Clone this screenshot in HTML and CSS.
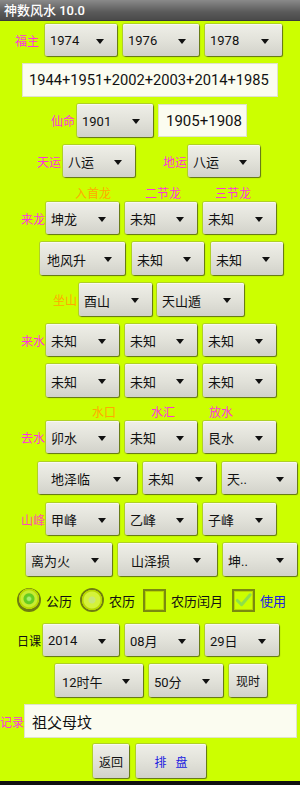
FILE: index.html
```html
<!DOCTYPE html>
<html lang="zh">
<head>
<meta charset="utf-8">
<title>神数风水 10.0</title>
<link rel="stylesheet" href="styles.css">
</head>
<body>
<div class="page">
  <div class="titlebar">神数风水 10.0</div>

  <div class="row r1">
    <span class="lbl mag w30">福主</span>
    <div class="spin w72"><span>1974</span><i></i></div>
    <div class="spin w76"><span>1976</span><i></i></div>
    <div class="spin w77"><span>1978</span><i></i></div>
  </div>

  <div class="row tf1">
    <div class="field w256 f-big">1944+1951+2002+2003+2014+1985</div>
  </div>

  <div class="row r3">
    <span class="lbl mag w26">仙命</span>
    <div class="spin w76"><span>1901</span><i></i></div>
    <div class="field w89 f-mid">1905+1908</div>
  </div>

  <div class="row r4">
    <span class="lbl mag w26">天运</span>
    <div class="spin w72"><span>八运</span><i></i></div>
    <span class="lbl mag w25 ml28">地运</span>
    <div class="spin w72"><span>八运</span><i></i></div>
  </div>

  <div class="row sub sub1">
    <span class="lbl org w70">入首龙</span>
    <span class="lbl mag w70">二节龙</span>
    <span class="lbl mag w70">三节龙</span>
  </div>

  <div class="row r5 g6">
    <span class="lbl mag w25">来龙</span>
    <div class="spin w73"><span>坤龙</span><i></i></div>
    <div class="spin w72"><span>未知</span><i></i></div>
    <div class="spin w73"><span>未知</span><i></i></div>
  </div>

  <div class="row r6 g7">
    <div class="spin w85 pl"><span>地风升</span><i></i></div>
    <div class="spin w72"><span>未知</span><i></i></div>
    <div class="spin w72"><span>未知</span><i></i></div>
  </div>

  <div class="row r7 g5">
    <span class="lbl org w26">坐山</span>
    <div class="spin w73"><span>酉山</span><i></i></div>
    <div class="spin w87"><span>天山遁</span><i></i></div>
  </div>

  <div class="row r8 g6">
    <span class="lbl mag w25">来水</span>
    <div class="spin w73"><span>未知</span><i></i></div>
    <div class="spin w72"><span>未知</span><i></i></div>
    <div class="spin w73"><span>未知</span><i></i></div>
  </div>

  <div class="row r9 g6">
    <div class="spin w73"><span>未知</span><i></i></div>
    <div class="spin w72"><span>未知</span><i></i></div>
    <div class="spin w73"><span>未知</span><i></i></div>
  </div>

  <div class="row sub sub2">
    <span class="lbl org w59">水口</span>
    <span class="lbl mag w58">水汇</span>
    <span class="lbl mag w40">放水</span>
  </div>

  <div class="row r10 g6">
    <span class="lbl mag w25">去水</span>
    <div class="spin w73"><span>卯水</span><i></i></div>
    <div class="spin w72"><span>未知</span><i></i></div>
    <div class="spin w73"><span>艮水</span><i></i></div>
  </div>

  <div class="row r11 g6">
    <div class="spin w99 pl2"><span>地泽临</span><i></i></div>
    <div class="spin w73"><span>未知</span><i></i></div>
    <div class="spin w75"><span>天..</span><i></i></div>
  </div>

  <div class="row r12 g6">
    <span class="lbl pink w25">山峰</span>
    <div class="spin w73"><span>甲峰</span><i></i></div>
    <div class="spin w72"><span>乙峰</span><i></i></div>
    <div class="spin w73"><span>子峰</span><i></i></div>
  </div>

  <div class="row r13 g6">
    <div class="spin w86"><span>离为火</span><i></i></div>
    <div class="spin w99 pl2"><span>山泽损</span><i></i></div>
    <div class="spin w74"><span>坤..</span><i></i></div>
  </div>

  <div class="row opts">
    <label class="opt"><span class="radio on"></span><span>公历</span></label>
    <label class="opt"><span class="radio"></span><span>农历</span></label>
    <label class="opt"><span class="check"></span><span>农历闰月</span></label>
    <label class="opt"><span class="check on"><svg viewBox="0 0 20 20" width="20" height="20"><path d="M3.5 10.5 L8 15 L17 4.5" fill="none" stroke="#8ee04a" stroke-width="3.2" stroke-linecap="round" stroke-linejoin="round"/></svg></span><span class="blue">使用</span></label>
  </div>

  <div class="row r14 g6">
    <span class="lbl blk w26">日课</span>
    <div class="spin w76"><span>2014</span><i></i></div>
    <div class="spin w74"><span>08月</span><i></i></div>
    <div class="spin w74"><span>29日</span><i></i></div>
  </div>

  <div class="row r15 g6">
    <div class="spin w88 pl"><span>12时午</span><i></i></div>
    <div class="spin w74"><span>50分</span><i></i></div>
    <div class="btn w38">现时</div>
  </div>

  <div class="row tf2">
    <span class="lbl mag w24">记录</span>
    <div class="field w273 f-mid">祖父母坟</div>
  </div>

  <div class="row btns">
    <div class="btn w36">返回</div>
    <div class="btn w70 blue">排&nbsp;&nbsp;&nbsp;盘</div>
  </div>

  <div class="bottombar"></div>
</div>
</body>
</html>
```
FILE: styles.css
```css
* { box-sizing: border-box; }
html, body { margin: 0; padding: 0; }
body {
  background: #ccff00;
  font-family: Roboto, "Noto Sans CJK SC", "DejaVu Sans", sans-serif;
  color: #111;
}
.page {
  width: 300px;
  height: 785px;
  display: flex;
  flex-direction: column;
  overflow: hidden;
}
.titlebar {
  height: 21px;
  flex: none;
  background: linear-gradient(#8a8a8a, #5a5a5a 60%, #4a4a4a);
  color: #fff;
  font-size: 13px;
  font-weight: 500;
  line-height: 21px;
  padding-left: 4px;
  border-bottom: 1px solid #3a3a3a;
}
.row {
  display: flex;
  align-items: center;
  flex: none;
}
.lbl {
  font-size: 12px;
  flex: none;
  white-space: nowrap;
}
.mag { color: #ff33dd; }
.pink { color: #ff4fb0; }
.org { color: #ffaa00; }
.blk { color: #111; }
.blue { color: #2020e0; }

.spin {
  flex: none;
  display: flex;
  align-items: center;
  justify-content: space-between;
  height: 100%;
  padding: 0 13px 0 5px;
  font-size: 13px;
  background: linear-gradient(#efefe8, #e2e2da 50%, #d2d2ca);
  border-radius: 2px;
  box-shadow: inset 0 1px 0 #f8f8f4, 1px 1px 1px rgba(0,0,0,0.45), 0 0 0 1px rgba(120,120,110,0.35);
}
.spin.pl { padding-left: 7px; }
.spin.pl2 { padding-left: 13px; padding-right: 16px; }
.spin span { white-space: nowrap; margin-top: 1px; }
.spin i {
  display: block;
  width: 0;
  height: 0;
  border-left: 4px solid transparent;
  border-right: 4px solid transparent;
  border-top: 5px solid #111;
  margin-top: 2px;
}
.btn {
  flex: none;
  height: 100%;
  display: flex;
  align-items: center;
  justify-content: center;
  font-size: 12px;
  background: linear-gradient(#efefe8, #e2e2da 50%, #d2d2ca);
  border-radius: 2px;
  box-shadow: inset 0 1px 0 #f8f8f4, 1px 1px 1px rgba(0,0,0,0.45), 0 0 0 1px rgba(120,120,110,0.35);
  white-space: nowrap;
}
.field {
  flex: none;
  height: 100%;
  background: #fbfcf0;
  border: 1px solid #dfe3c8;
  font-size: 15px;
  display: flex;
  align-items: center;
  padding-left: 6px;
  white-space: nowrap;
  overflow: hidden;
}
.field.f-big { font-size: 14.7px; }
.field.f-mid { padding-left: 7px; }

/* widths */
.w24 { width: 24px; }
.w25 { width: 25px; }
.w26 { width: 26px; }
.w30 { width: 30px; }
.w36 { width: 36px; }
.w38 { width: 38px; }
.w40 { width: 40px; }
.w58 { width: 58px; }
.w59 { width: 59px; }
.w70 { width: 70px; }
.w72 { width: 72px; }
.w73 { width: 73px; }
.w74 { width: 74px; }
.w75 { width: 75px; }
.w76 { width: 76px; }
.w77 { width: 77px; }
.w85 { width: 85px; }
.w86 { width: 86px; }
.w87 { width: 87px; }
.w88 { width: 88px; }
.w89 { width: 89px; }
.w99 { width: 99px; }
.w256 { width: 256px; }
.w273 { width: 273px; }
.ml28 { margin-left: 28px; }

.g5 { gap: 5px; }
.g6 { gap: 6px; }
.g7 { gap: 7px; }

/* rows */
.r1 { margin-top: 3px; height: 32px; padding-left: 15px; gap: 6px; }
.r1 .lbl { margin-right: -6px; }
.tf1 { margin-top: 7px; height: 34px; padding-left: 22px; }
.r3 { margin-top: 7px; height: 33px; padding-left: 51px; gap: 5px; }
.r3 .lbl { margin-right: -5px; }
.r4 { margin-top: 8px; height: 32px; padding-left: 37px; }
.sub { height: 14px; }
.sub1 { margin-top: 8px; padding-left: 75px; }
.r5 { margin-top: 3px; height: 32px; padding-left: 21px; }
.r5 .lbl, .r8 .lbl, .r10 .lbl, .r12 .lbl, .r14 .lbl { margin-right: -6px; }
.r6 { margin-top: 8px; height: 33px; padding-left: 40px; }
.r7 { margin-top: 8px; height: 33px; padding-left: 53px; }
.r7 .lbl { margin-right: -5px; }
.r8 { margin-top: 8px; height: 32px; padding-left: 21px; }
.r9 { margin-top: 8px; height: 33px; padding-left: 46px; }
.sub2 { margin-top: 7px; padding-left: 92px; }
.r10 { margin-top: 3px; height: 32px; padding-left: 21px; }
.r11 { margin-top: 9px; height: 32px; padding-left: 38px; }
.r12 { margin-top: 9px; height: 32px; padding-left: 21px; }
.r13 { margin-top: 8px; height: 33px; padding-left: 26px; }
.r14 { margin-top: 12px; height: 32px; padding-left: 17px; }
.r15 { margin-top: 8px; height: 33px; padding-left: 55px; }
.tf2 { margin-top: 7px; height: 34px; padding-left: 0; }
.btns { margin-top: 6px; height: 34px; padding-left: 93px; gap: 7px; }

/* options */
.opts { margin-top: 12px; height: 24px; padding-left: 17px; gap: 8px; font-size: 13px; }
.opt { display: flex; align-items: center; gap: 5px; }
.radio {
  width: 24px;
  height: 24px;
  border-radius: 50%;
  flex: none;
  background: radial-gradient(circle, #c9e67a 0 3px, #d4f23a 4px 8px, #b8d800 9px 10px, #6f7d10 10.5px 12px);
}
.radio.on {
  background: radial-gradient(circle at 50% 45%, #a8ef70 0 1.5px, #66cc22 3px 5px, #c8ec30 6px 8px, #b8d800 9px 10px, #6f7d10 10.5px 12px);
}
.check {
  width: 23px;
  height: 23px;
  flex: none;
  border: 2px solid #7a8a10;
  box-shadow: inset 0 0 0 1px #b8d600;
  display: flex;
  align-items: center;
  justify-content: center;
}
.opt:nth-child(4) .check { margin-left: 1px; }

.bottombar {
  margin-top: auto;
  height: 4px;
  background: #111;
  flex: none;
}
```
